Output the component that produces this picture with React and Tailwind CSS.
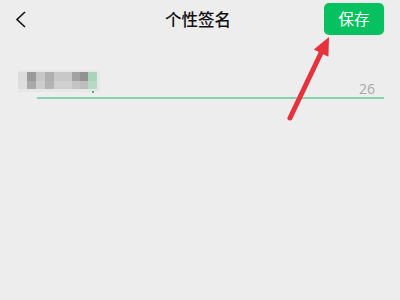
import React from "react";

const cells = [
  { x: 18, w: 9, top: "#dcdcdc", bot: "#dedede" },
  { x: 27, w: 9, top: "#9a9a9a", bot: "#a9a9a9" },
  { x: 36, w: 9, top: "#c6c6c6", bot: "#cdcdcd" },
  { x: 45, w: 9, top: "#b0b0b0", bot: "#b4b4b4" },
  { x: 54, w: 18, top: "#c8c8c8", bot: "#d0d0d0" },
  { x: 72, w: 8, top: "#a2a2a2", bot: "#c4c4c4" },
  { x: 80, w: 8, top: "#929292", bot: "#bdbdbd" },
  { x: 88, w: 9, top: "#a9d4b9", bot: "#b7dac4" },
];

export default function App() {
  return (
    <div
      className="relative w-[400px] h-[300px] overflow-hidden bg-[#ededed]"
      style={{ fontFamily: '"Noto Sans CJK SC", "Noto Sans", sans-serif' }}
    >
      <div className="grid grid-cols-[1fr_auto_1fr] items-center h-[36px] pt-[2px]">
        <div className="pl-[14px] flex items-center">
          <svg width="13" height="19" viewBox="0 0 13 19">
            <path d="M11 2 L3 9.5 L11 17" fill="none" stroke="#111" strokeWidth="1.6" />
          </svg>
        </div>
        <div className="text-[16.5px] font-medium text-[#111] leading-none pr-[4px]">个性签名</div>
        <div className="flex justify-end pr-[16px]">
          <div className="w-[60px] h-[32px] rounded-[5px] bg-[#07c160] flex items-center justify-center text-white text-[15.5px] leading-none">
            保存
          </div>
        </div>
      </div>

      <div className="pl-[18px] pr-[16px] pt-[34px]">
        <svg width="90" height="24" viewBox="18 68 90 24" className="block">
          <rect x="18" y="68" width="82" height="22" fill="#e2e2e2" opacity="0.5" />
          {cells.map((c, i) => (
            <g key={i}>
              <rect x={c.x} y={70} width={c.w} height={9} fill={c.top} />
              <rect x={c.x} y={79} width={c.w} height={8} fill={c.bot} />
            </g>
          ))}
          <rect x="92" y="89" width="2" height="2" fill="#3cb878" />
        </svg>
        <div className="flex justify-end pr-[9px] -mt-[12px]">
          <span className="text-[14px] leading-none text-[#a8a8a8]" style={{ fontFamily: '"Open Sans", sans-serif' }}>26</span>
        </div>
        <div className="mt-[1px] ml-[19px] h-[1.5px] bg-[#86d1ae]" />
      </div>

      <svg className="absolute inset-0 pointer-events-none" width="400" height="300">
        <line x1="290" y1="118" x2="321" y2="53" stroke="#e5323d" strokeWidth="5" strokeLinecap="round" />
        <polygon points="329,37 313.8,49.5 328.4,56.7" fill="#e5323d" />
      </svg>
    </div>
  );
}
